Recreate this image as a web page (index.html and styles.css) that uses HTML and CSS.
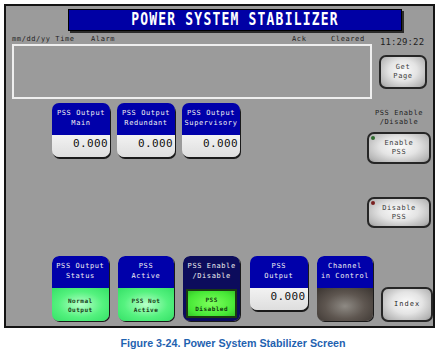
FILE: index.html
```html
<!DOCTYPE html>
<html lang="en">
<head>
    <meta charset="UTF-8">
    <title>Power System Stabilizer</title>
    <link rel="stylesheet" href="styles.css">
</head>
<body>
    <div class="screen">
        <div class="title"><span>POWER SYSTEM STABILIZER</span></div>

        <div class="top">
            <div class="alarm-col">
                <div class="alarm-labels">
                    <span class="lbl-time">mm/dd/yy Time</span>
                    <span class="lbl-alarm">Alarm</span>
                    <span class="lbl-ack">Ack</span>
                    <span class="lbl-cleared">Cleared</span>
                </div>
                <div class="alarm-box"></div>
            </div>
            <div class="side-top">
                <div class="clock">11:29:22</div>
                <div class="btn btn-get">Get<br>Page</div>
            </div>
        </div>

        <div class="middle">
            <div class="readouts">
                <div class="readout">
                    <div class="head">PSS Output<br>Main</div>
                    <div class="value">0.000</div>
                </div>
                <div class="readout">
                    <div class="head">PSS Output<br>Redundant</div>
                    <div class="value">0.000</div>
                </div>
                <div class="readout">
                    <div class="head">PSS Output<br>Supervisory</div>
                    <div class="value">0.000</div>
                </div>
            </div>
            <div class="side-mid">
                <div class="side-label">PSS Enable<br>/Disable</div>
                <div class="btn btn-enable"><span class="led led-green"></span>Enable<br>PSS</div>
                <div class="btn btn-disable"><span class="led led-red"></span>Disable<br>PSS</div>
            </div>
        </div>

        <div class="bottom">
            <div class="status">
                <div class="head">PSS Output<br>Status</div>
                <div class="lamp">Normal<br>Output</div>
            </div>
            <div class="status">
                <div class="head">PSS<br>Active</div>
                <div class="lamp">PSS Not<br>Active</div>
            </div>
            <div class="status status-dark">
                <div class="head">PSS Enable<br>/Disable</div>
                <div class="lamp-wrap"><div class="lamp lamp-btn">PSS<br>Disabled</div></div>
            </div>
            <div class="readout readout-low">
                <div class="head">PSS<br>Output</div>
                <div class="value">0.000</div>
            </div>
            <div class="status">
                <div class="head">Channel<br>in Control</div>
                <div class="lamp lamp-off"></div>
            </div>
            <div class="btn btn-index">Index</div>
        </div>
    </div>

    <p class="caption">Figure 3-24. Power System Stabilizer Screen</p>
</body>
</html>
```

FILE: styles.css
```css
body {
    margin: 0;
    background: #fff;
    font-family: "DejaVu Sans Mono", "Liberation Mono", monospace;
}
.screen {
    box-sizing: border-box;
    width: 431px;
    height: 324px;
    margin: 4px 0 0 4px;
    border: 2px solid #141414;
    background: #9b9b9b;
    display: flex;
    flex-direction: column;
}
.title {
    box-sizing: border-box;
    width: 334px;
    height: 22px;
    margin: 3px 0 0 62px;
    background: #0000a4;
    border: 1px solid #000;
    box-shadow: 2px 2px 0 #2a2a2a;
    color: #fff;
    display: flex;
    justify-content: center;
    align-items: center;
}
.title span {
    display: block;
    font-size: 13px;
    font-weight: bold;
    letter-spacing: 1.2px;
    line-height: 14px;
    transform: scaleY(1.35);
}

/* alarm area */
.top {
    display: flex;
}
.alarm-col {
    margin-left: 6px;
    width: 360px;
}
.alarm-labels {
    position: relative;
    height: 13px;
    font-size: 7px;
    color: #1e1e1e;
    letter-spacing: 0.6px;
}
.alarm-labels span {
    position: absolute;
    top: 4px;
}
.lbl-time { left: 0; }
.lbl-alarm { left: 79px; }
.lbl-ack { left: 280px; }
.lbl-cleared { left: 319px; }
.alarm-box {
    box-sizing: border-box;
    height: 55px;
    border: 2px solid #efefef;
}
.side-top {
    margin-left: 7px;
    width: 50px;
    display: flex;
    flex-direction: column;
    align-items: flex-start;
}
.clock {
    margin: 6px 0 0 1px;
    font-size: 9px;
    color: #1e1e1e;
    letter-spacing: 0.1px;
    height: 12px;
}
.btn {
    box-sizing: border-box;
    position: relative;
    border: 2px solid #262626;
    border-radius: 7px;
    background: radial-gradient(ellipse at 50% 45%, #fbfbfb 0%, #e4e4e4 45%, #b4b4b4 85%, #8c8c8c 100%);
    color: #3a3a3a;
    font-size: 7px;
    letter-spacing: 0.6px;
    line-height: 9px;
    text-align: center;
    display: flex;
    align-items: center;
    justify-content: center;
}
.btn-get {
    width: 48px;
    height: 34px;
    margin-top: 6px;
}

/* readouts */
.middle {
    display: flex;
    height: 129px;
}
.readouts {
    display: flex;
    gap: 7px;
    margin: 4px 0 0 46px;
    align-items: flex-start;
}
.readout {
    width: 58px;
    border-radius: 7px;
    box-shadow: 1px 2px 0 #1a1a1a;
}
.head {
    box-sizing: border-box;
    height: 32px;
    padding-top: 5px;
    border-radius: 7px 7px 0 0;
    background: #0000aa;
    color: #f2f2f2;
    font-size: 7px;
    letter-spacing: 0.6px;
    line-height: 10px;
    text-align: center;
    white-space: nowrap;
}
.value {
    box-sizing: border-box;
    height: 22px;
    padding-right: 2px;
    border-radius: 0 0 7px 7px;
    background: linear-gradient(#f2f2f2, #dedede);
    color: #111;
    font-size: 11px;
    letter-spacing: 0.4px;
    line-height: 18px;
    text-align: right;
}
.side-mid {
    margin-left: auto;
    margin-right: 2px;
    width: 64px;
    display: flex;
    flex-direction: column;
    align-items: center;
}
.side-label {
    margin-top: 10px;
    height: 23px;
    font-size: 7px;
    letter-spacing: 0.6px;
    line-height: 9px;
    color: #222;
    text-align: center;
}
.btn-enable {
    width: 64px;
    height: 32px;
}
.btn-disable {
    width: 64px;
    height: 31px;
    margin-top: 33px;
}
.led {
    position: absolute;
    top: 2px;
    left: 2px;
    width: 4px;
    height: 4px;
    border-radius: 50%;
}
.led-green { background: #2d6a2d; }
.led-red { background: #7a2020; }

/* status row */
.bottom {
    display: flex;
    align-items: flex-start;
    gap: 9px;
    margin: 28px 0 0 46px;
}
.status {
    width: 57px;
    border-radius: 7px;
    overflow: hidden;
    box-shadow: 1px 1px 0 #1a1a1a;
}
.lamp {
    height: 33px;
    background: radial-gradient(ellipse at 50% 50%, #b8ffc8 0%, #55f27f 55%, #34e066 100%);
    color: #1a3a1a;
    font-size: 6px;
    font-weight: bold;
    letter-spacing: 0.5px;
    line-height: 9px;
    text-align: center;
    display: flex;
    align-items: center;
    justify-content: center;
}
.status-dark .head {
    background: #0c0c5c;
}
.lamp-wrap {
    height: 33px;
    background: #0c0c5c;
    padding: 1px 3px 3px;
    box-sizing: border-box;
}
.lamp-btn {
    box-sizing: border-box;
    height: 29px;
    border: 2px solid #1b3a12;
    background: radial-gradient(ellipse at 50% 50%, #7cff5c 0%, #47e836 70%, #36c528 100%);
    color: #123a10;
}
.lamp-off {
    background: radial-gradient(ellipse at 50% 55%, #8e8a84 0%, #5e5650 50%, #3a3430 100%);
}
.readout-low {
    width: 58px;
    margin-left: 1px;
}
.btn-index {
    width: 52px;
    height: 35px;
    margin-top: 31px;
    margin-left: -1px;
    font-size: 7px;
    letter-spacing: 1px;
    color: #2a2a2a;
}

.caption {
    margin: 9px 0 0;
    box-sizing: border-box;
    width: 442px;
    padding-left: 24px;
    text-align: center;
    color: #1f62b0;
    font-family: "Liberation Sans", Arial, sans-serif;
    font-weight: bold;
    font-size: 10.7px;
}
```
